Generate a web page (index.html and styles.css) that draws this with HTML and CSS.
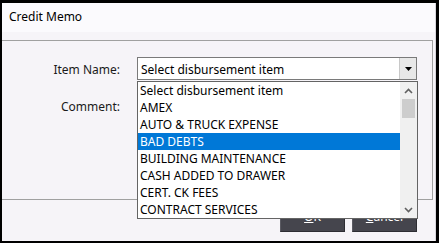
FILE: index.html
```
<!DOCTYPE html>
<html lang="en">
<head>
    <meta charset="UTF-8">
    <title>Credit Memo</title>
    <link rel="stylesheet" href="styles.css">
</head>
<body>
    <div class="window">
        <div class="titlebar">Credit Memo</div>

        <div class="client">
            <!-- Khung nhập liệu -->
            <div class="group">
                <div class="row">
                    <label class="row-label">Item Name:</label>
                    <div class="combo">
                        <span class="combo-text">Select disbursement item</span>
                        <span class="combo-btn">
                            <svg width="7" height="4" viewBox="0 0 7 4"><path d="M0 0H7L3.5 4Z" fill="#000"/></svg>
                        </span>
                    </div>
                </div>
                <div class="row">
                    <label class="row-label">Comment:</label>
                    <div class="textbox"></div>
                </div>
            </div>

            <div class="buttons">
                <button class="btn"><u>O</u>K</button>
                <button class="btn"><u>C</u>ancel</button>
            </div>

            <!-- Danh sách thả xuống -->
            <div class="dropdown">
                <ul class="dropdown-list">
                    <li>Select disbursement item</li>
                    <li>AMEX</li>
                    <li>AUTO &amp; TRUCK EXPENSE</li>
                    <li class="selected">BAD DEBTS</li>
                    <li>BUILDING MAINTENANCE</li>
                    <li>CASH ADDED TO DRAWER</li>
                    <li>CERT. CK FEES</li>
                    <li>CONTRACT SERVICES</li>
                </ul>
                <div class="scrollbar">
                    <span class="scroll-arrow">
                        <svg width="9" height="6" viewBox="0 0 9 6"><path d="M1 5L4.5 1.5L8 5" fill="none" stroke="#606060" stroke-width="1.6"/></svg>
                    </span>
                    <span class="scroll-thumb"></span>
                    <span class="scroll-track"></span>
                    <span class="scroll-arrow">
                        <svg width="9" height="6" viewBox="0 0 9 6"><path d="M1 1L4.5 4.5L8 1" fill="none" stroke="#606060" stroke-width="1.6"/></svg>
                    </span>
                </div>
            </div>
        </div>
    </div>
</body>
</html>
```

FILE: styles.css
```
body, html {
    margin: 0;
    padding: 0;
    width: 100%;
    height: 100%;
    background: #000;
    overflow: hidden;
    font-family: 'Noto Sans', 'Open Sans', sans-serif;
    font-size: 12px;
    color: #000;
}

.window {
    margin: 3px 0 0 2px;
    width: 433px;
    height: 238px;
    background: #f6f4f8;
    border-right: 1px solid #d8d6dc;
    display: flex;
    flex-direction: column;
}

.titlebar {
    height: 29px;
    padding-left: 7px;
    line-height: 28px;
    background: #fbfafd;
    font-size: 12px;
}

.client {
    position: relative;
    flex: 1;
    padding-top: 8px;
}

.group {
    box-sizing: border-box;
    width: 431px;
    height: 160px;
    border-top: 1px solid #a0a0a0;
    border-right: 1px solid #a0a0a0;
    border-bottom: 1px solid #a0a0a0;
    padding-top: 16px;
    display: flex;
    flex-direction: column;
    gap: 14px;
}

.row {
    display: flex;
    align-items: center;
    gap: 17px;
    height: 23px;
}

.row-label {
    width: 118px;
    text-align: right;
    color: #1a1a1a;
    padding-top: 1px;
}

.combo {
    box-sizing: border-box;
    width: 280px;
    height: 23px;
    border: 1px solid #7a7a7a;
    background: #fff;
    display: flex;
    align-items: center;
}

.combo-text {
    flex: 1;
    padding: 1px 0 0 3px;
}

.combo-btn {
    box-sizing: border-box;
    width: 17px;
    height: 21px;
    background: #e8e8e8;
    border-left: 1px solid #c8c8c8;
    display: flex;
    align-items: center;
    justify-content: center;
}

.textbox {
    box-sizing: border-box;
    width: 280px;
    height: 23px;
    border: 1px solid #7a7a7a;
    background: #fff;
}

.buttons {
    display: flex;
    justify-content: flex-end;
    gap: 7px;
    padding: 1px 18px 0 0;
}

.btn {
    box-sizing: border-box;
    width: 65px;
    height: 31px;
    background: #45454d;
    border: 1px solid #2d2d33;
    border-top-color: #5a5a62;
    border-left-color: #5a5a62;
    color: #fff;
    font-family: inherit;
    font-size: 12px;
    padding: 0;
}

.dropdown {
    position: absolute;
    left: 135px;
    top: 49px;
    width: 281px;
    height: 138px;
    box-sizing: border-box;
    border: 1px solid #646464;
    background: #fff;
    display: flex;
}

.dropdown-list {
    list-style: none;
    margin: 0;
    padding: 0;
    flex: 1;
}

.dropdown-list li {
    height: 17px;
    box-sizing: border-box;
    padding: 1px 0 0 2px;
    line-height: 16px;
    white-space: nowrap;
    overflow: hidden;
}

.dropdown-list li.selected {
    background: #0078d7;
    color: #fff;
}

.scrollbar {
    width: 17px;
    background: #f0f0f0;
    display: flex;
    flex-direction: column;
}

.scroll-arrow {
    height: 17px;
    display: flex;
    align-items: center;
    justify-content: center;
}

.scroll-thumb {
    height: 19px;
    margin: 0 2px;
    background: #cdcdcd;
}

.scroll-track {
    flex: 1;
}
```
